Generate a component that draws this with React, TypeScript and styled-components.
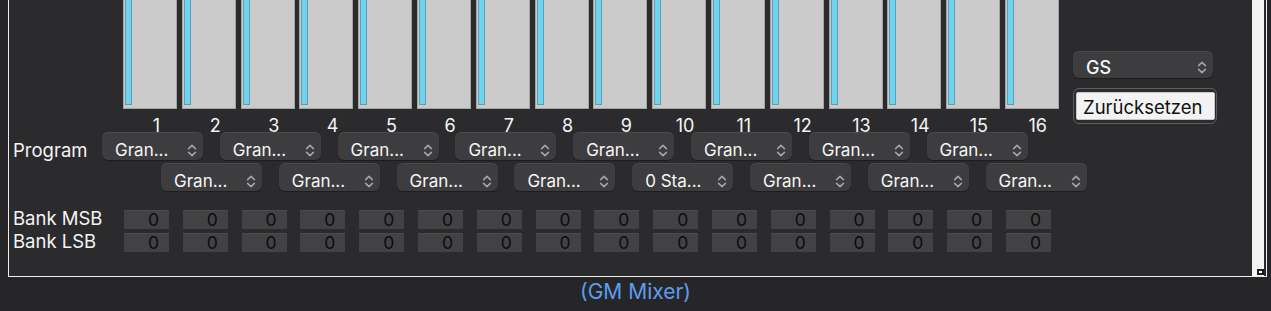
import React from "react";
import styled, { createGlobalStyle } from "styled-components";

const Global = createGlobalStyle`
  html, body { margin: 0; padding: 0; background: #262628; }
  body {
    font-family: Inter, "Liberation Sans", sans-serif;
    color: #f2f2f2;
    width: 1271px;
    height: 311px;
    overflow: hidden;
  }
  * { box-sizing: border-box; }
`;

const Frame = styled.div`
  margin-left: 8px;
  width: 1259px;
  height: 277px;
  border-left: 1px solid #ededed;
  border-right: 1px solid #ededed;
  border-bottom: 1px solid #ededed;
  background: #2b2b2d;
  display: flex;
`;

const Main = styled.div`
  width: 1064px;
  display: flex;
  flex-direction: column;
`;

const Side = styled.div`
  width: 144px;
  padding-top: 51px;
  display: flex;
  flex-direction: column;
  gap: 10px;
`;

const Spacer = styled.div`
  flex: 1;
`;

const Band = styled.div`
  width: 12px;
  margin-right: 2px;
  background: #f4f4f4;
  display: flex;
  flex-direction: column;
  justify-content: flex-end;
  align-items: flex-end;
`;

const ResizeHandle = styled.div`
  width: 7px;
  height: 6px;
  border: 2px solid #1c1c1c;
  background: #fff;
  margin: 0 0 1px 0;
`;

const SliderRow = styled.div`
  display: flex;
  gap: 4.8px;
  padding-left: 114px;
  height: 109px;
`;

const Slider = styled.div`
  width: 54px;
  height: 109px;
  background: #cbcbcb;
  border: 1px solid #a4a4a4;
  border-top: none;
  padding: 0 0 3px 1px;
  display: flex;
`;

const SliderFill = styled.div`
  width: 7px;
  background: #70d4ee;
  border: 1px solid #5a9fb3;
  border-top: none;
`;

const NumberRow = styled.div`
  display: flex;
  padding-left: 118px;
  margin-top: 9px;
  height: 14px;
`;

const ChannelNumber = styled.div`
  width: 58.75px;
  text-align: center;
  font-size: 18px;
  line-height: 15px;
  color: #f4f4f4;
`;

const ProgramSection = styled.div`
  display: grid;
  grid-template-columns: 93px 1fr;
  grid-template-rows: 28px 28px;
  row-gap: 3px;
`;

const RowLabel = styled.div`
  padding-left: 4px;
  font-size: 18px;
  color: #f4f4f4;
`;

const ProgramLabel = styled(RowLabel)`
  padding-top: 9px;
  line-height: 18px;
  font-size: 18.5px;
`;

const DropRow = styled.div<{ $offset: number }>`
  grid-column: 2;
  display: flex;
  gap: 16.8px;
  padding-left: ${(p) => p.$offset}px;
`;

const Popup = styled.div<{ $w: number }>`
  width: ${(p) => p.$w}px;
  height: 28px;
  border-radius: 6px;
  background: #3d3d40;
  box-shadow: inset 0 1px 0 rgba(255, 255, 255, 0.07), 0 1px 1px rgba(0, 0, 0, 0.35);
  display: flex;
  justify-content: space-between;
  align-items: flex-start;
  padding: 10px 6px 0 13px;
  font-size: 17px;
  line-height: 17px;
  color: #f6f6f6;
  white-space: nowrap;
`;

const Chevron = styled.svg`
  flex: none;
  margin-top: 2px;
`;

const GsPopup = styled(Popup)`
  height: 27px;
  padding: 8px 6px 0 13px;
  font-size: 18px;
  line-height: 18px;
  font-weight: 500;
`;

const ResetOuter = styled.div`
  width: 144px;
  height: 36px;
  border: 1px solid #5e5e60;
  border-radius: 6px;
  padding: 3px 2px 3px 2px;
`;

const ResetButton = styled.button`
  width: 139px;
  height: 28px;
  margin: 0;
  border: 1px solid #c8c8c8;
  border-radius: 2px;
  background: #f3f3f3;
  color: #111;
  font-family: Inter, "Liberation Sans", sans-serif;
  font-size: 18.5px;
  line-height: 20px;
  text-align: left;
  padding: 2px 0 0 6px;
`;

const BankSection = styled.div`
  margin-top: 19px;
  display: flex;
  flex-direction: column;
  gap: 4px;
`;

const BankRow = styled.div`
  display: flex;
  height: 19px;
`;

const BankLabel = styled(RowLabel)`
  width: 115px;
  line-height: 16px;
  font-size: 18.5px;
`;

const ValueCells = styled.div`
  display: flex;
  gap: 13.8px;
`;

const ValueBox = styled.div`
  width: 45px;
  height: 19px;
  background: #424244;
  border-top: 1px solid #4b4b4d;
  text-align: right;
  padding-right: 10px;
  font-size: 17.5px;
  line-height: 18px;
  color: #0c0c0c;
`;

const Footer = styled.div`
  margin-top: 3px;
  text-align: center;
  font-size: 21px;
  line-height: 24px;
  color: #5c9df0;
`;

const channels = Array.from({ length: 16 }, (_, i) => i + 1);

const row1 = ["Gran...", "Gran...", "Gran...", "Gran...", "Gran...", "Gran...", "Gran...", "Gran..."];
const row2 = ["Gran...", "Gran...", "Gran...", "Gran...", "0 Sta...", "Gran...", "Gran...", "Gran..."];

const UpDown = () => (
  <Chevron width="10" height="13" viewBox="0 0 10 13" fill="none">
    <path d="M1.6 4.6 L5 1.4 L8.4 4.6" stroke="#a8a8aa" strokeWidth="1.5" strokeLinecap="round" strokeLinejoin="round" />
    <path d="M1.6 8.4 L5 11.6 L8.4 8.4" stroke="#a8a8aa" strokeWidth="1.5" strokeLinecap="round" strokeLinejoin="round" />
  </Chevron>
);

export default function App() {
  return (
    <>
      <Global />
      <Frame>
        <Main>
          <SliderRow>
            {channels.map((c) => (
              <Slider key={c}>
                <SliderFill />
              </Slider>
            ))}
          </SliderRow>
          <NumberRow>
            {channels.map((c) => (
              <ChannelNumber key={c}>{c}</ChannelNumber>
            ))}
          </NumberRow>
          <ProgramSection>
            <ProgramLabel>Program</ProgramLabel>
            <DropRow $offset={0}>
              {row1.map((t, i) => (
                <Popup $w={101} key={i}>
                  <span>{t}</span>
                  <UpDown />
                </Popup>
              ))}
            </DropRow>
            <DropRow $offset={59}>
              {row2.map((t, i) => (
                <Popup $w={101} key={i}>
                  <span>{t}</span>
                  <UpDown />
                </Popup>
              ))}
            </DropRow>
          </ProgramSection>
          <BankSection>
            <BankRow>
              <BankLabel>Bank MSB</BankLabel>
              <ValueCells>
                {channels.map((c) => (
                  <ValueBox key={c}>0</ValueBox>
                ))}
              </ValueCells>
            </BankRow>
            <BankRow>
              <BankLabel>Bank LSB</BankLabel>
              <ValueCells>
                {channels.map((c) => (
                  <ValueBox key={c}>0</ValueBox>
                ))}
              </ValueCells>
            </BankRow>
          </BankSection>
        </Main>
        <Side>
          <GsPopup $w={140}>
            <span>GS</span>
            <UpDown />
          </GsPopup>
          <ResetOuter>
            <ResetButton>Zurücksetzen</ResetButton>
          </ResetOuter>
        </Side>
        <Spacer />
        <Band>
          <ResizeHandle />
        </Band>
      </Frame>
      <Footer>(GM Mixer)</Footer>
    </>
  );
}
